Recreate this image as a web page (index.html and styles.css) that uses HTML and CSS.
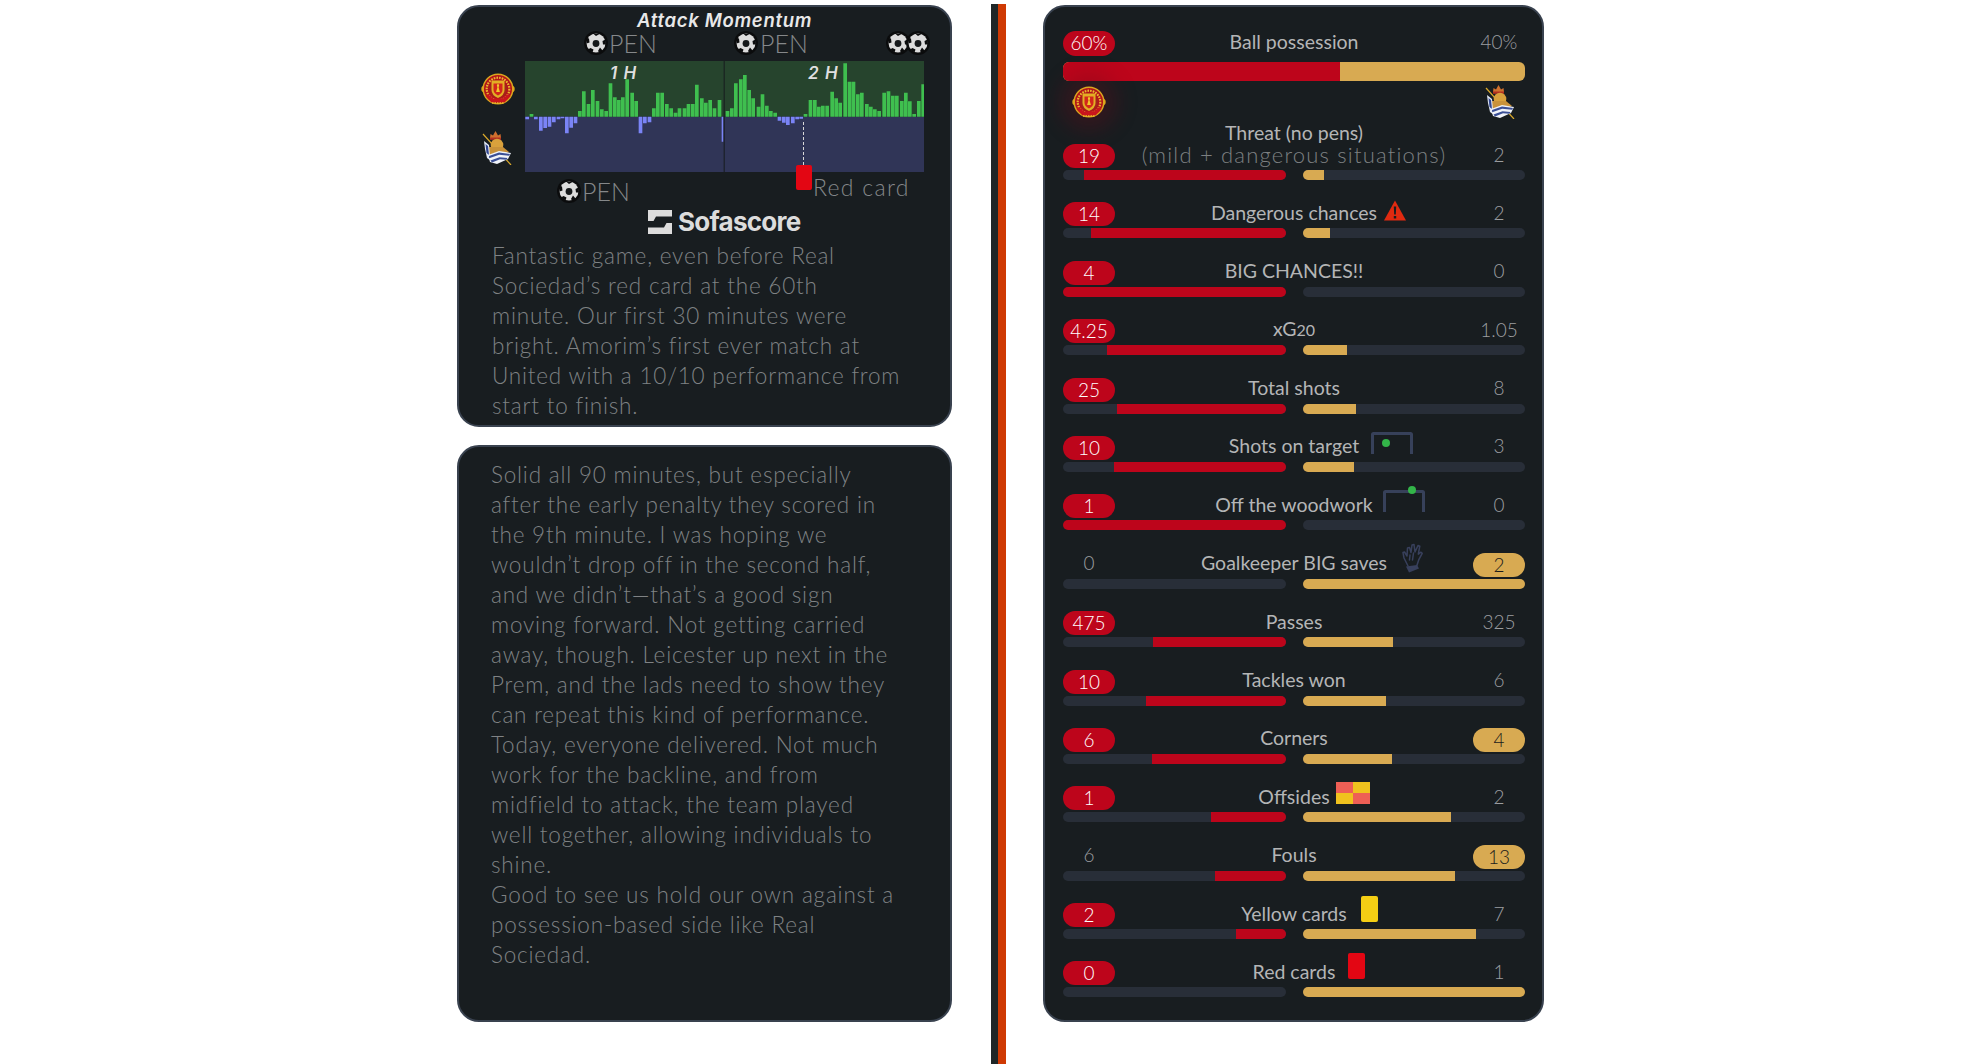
FILE: index.html
```html
<!DOCTYPE html>
<html lang="en">
<head>
<meta charset="utf-8">
<title>Match stats</title>
<link rel="stylesheet" href="styles.css">
</head>
<body>
<svg class="defs" width="0" height="0" aria-hidden="true">
  <symbol id="ball" viewBox="0 0 24 24">
    <circle cx="12" cy="12" r="12" fill="#0b0c0d"/>
    <circle cx="12" cy="12" r="9.500" fill="#dcdcdc"/>
    <circle cx="12" cy="12.500" r="3.400" fill="#15181a"/>
    <path d="M9 2.500l3 2.500 3.500-2zM21.500 8.500l-3 1.500 .5 3.500 3 0zM18.500 19.500l-2.500-3-2 3.500 1.500 2zM8.500 21.500l1-3-3-1.500-2.500 1.500zM2.500 12.500l3-1-.5-4-2-.5z" fill="#0b0c0d"/>
  </symbol>
  <symbol id="mu" viewBox="0 0 34 34">
    <circle cx="3.500" cy="17" r="3.200" fill="#e0a818"/>
    <circle cx="30.500" cy="17" r="3.200" fill="#e0a818"/>
    <circle cx="17" cy="17" r="14.800" fill="#b3141a" stroke="#dba71e" stroke-width="1.500"/>
    <circle cx="17" cy="17" r="11.300" fill="none" stroke="#eab92c" stroke-width="2.200" stroke-dasharray="1.600 1.100"/>
    <circle cx="17" cy="17" r="9" fill="#a3241a"/>
    <path d="M10.500 8.500h13v9.500q0 5-6.500 8-6.500-3-6.500-8z" fill="#e3ae24"/>
    <path d="M12.500 11.500h9v6.500q0 3-4.500 5.500-4.500-2.500-4.500-5.500z" fill="#d3261c"/>
    <path d="M15.800 13l1.200-1.200 1.200 1.200-.6 2.500 1.300 4.500h-3.800l1.300-4.500z" fill="#f0c62a"/>
    <path d="M4.500 24l6 6.500h13l6-6.500-2.500-2-5 4.500h-10l-5-4.500z" fill="#c9161d"/>
    <path d="M11 31h12" stroke="#eab92c" stroke-width="1.400" stroke-dasharray="1.500 1"/>
  </symbol>
  <symbol id="rs" viewBox="0 0 34 34">
    <path d="M2 3l28 31" stroke="#d9a92b" stroke-width="1.200"/>
    <path d="M9 7l.5-4 2.500 1.500L14.500 0l2.500 4.500L19.500 3l.5 4z" fill="#d0702e"/>
    <path d="M9 6.500h11v2.300H9z" fill="#b3301f"/>
    <circle cx="16" cy="14" r="6.300" fill="#d9a13c"/>
    <path d="M8 16h14l6 5-10 4-10-1z" fill="#c9923a"/>
    <path d="M3 10l5 4 1 11 1 5-4-3-2-9z" fill="#e3e9f4"/>
    <path d="M4.500 13l2.500 2 1 9-2.500-2z" fill="#31468f"/>
    <path d="M7 24l11-4 12 2-3 6-11 5-7-2z" fill="#f0f3f9"/>
    <path d="M8 25l10-3.500 11 1.500-.8 1.800-10-1-10 3.500zM9.500 29.500l9-3.200 8 .7-1 1.800-6.500-.500-8 3.300z" fill="#3a4f96"/>
  </symbol>
  <symbol id="goal" viewBox="0 0 42 22">
    <path d="M1.500 22V2.500q0-1 1-1h37q1 0 1 1V22" fill="none" stroke="#37415a" stroke-width="3"/>
  </symbol>
</svg>

<main class="page">
  <div class="col">
    <section class="card card-top">
      <div class="momentum">
        <div class="mm-title">Attack Momentum</div>
        <svg class="mm-ball b1"><use href="#ball"/></svg><span class="mm-pen p1">PEN</span>
        <svg class="mm-ball b2"><use href="#ball"/></svg><span class="mm-pen p2">PEN</span>
        <svg class="mm-ball b3"><use href="#ball"/></svg>
        <svg class="mm-ball b4"><use href="#ball"/></svg>

        <svg class="chart" width="399" height="111" viewBox="0 0 1197 333">
          <rect width="1197" height="167" fill="#26442d"/>
          <rect y="167" width="1197" height="166" fill="#303557"/>
          <path fill="#3fbf4f" d="M14 167v-8h11v8zM159 167v-17h11v17zM171 167v-76h11v76zM185 167v-38h11v38zM198 167v-80h11v80zM212 167v-47h11v47zM225 167v-22h11v22zM238 167v-17h11v17zM251 167v-100h11v100zM264 167v-58h11v58zM276 167v-50h11v50zM288 167v-58h11v58zM301 167v-112h11v112zM316 167v-72h11v72zM328 167v-47h11v47zM381 167v-25h11v25zM393 167v-72h11v72zM406 167v-72h11v72zM420 167v-38h11v38zM433 167v-25h11v25zM446 167v-12h11v12zM458 167v-25h11v25zM473 167v-25h11v25zM485 167v-38h11v38zM498 167v-38h11v38zM510 167v-96h11v96zM525 167v-55h11v55zM537 167v-42h11v42zM550 167v-50h11v50zM563 167v-25h11v25zM578 167v-50h11v50zM602 167v-17h11v17zM615 167v-25h11v25zM627 167v-100h11v100zM642 167v-112h11v112zM654 167v-125h11v125zM667 167v-80h11v80zM679 167v-55h11v55zM695 167v-30h11v30zM707 167v-67h11v67zM720 167v-33h11v33zM732 167v-17h11v17zM745 167v-12h11v12zM836 167v-8h11v8zM851 167v-50h11v50zM864 167v-50h11v50zM876 167v-30h11v30zM888 167v-33h11v33zM901 167v-33h11v33zM916 167v-75h11v75zM928 167v-55h11v55zM940 167v-42h11v42zM955 167v-160h11v160zM968 167v-105h11v105zM980 167v-105h11v105zM993 167v-67h11v67zM1005 167v-72h11v72zM1020 167v-38h11v38zM1032 167v-30h11v30zM1044 167v-22h11v22zM1057 167v-17h11v17zM1072 167v-72h11v72zM1085 167v-76h11v76zM1098 167v-63h11v63zM1110 167v-63h11v63zM1125 167v-47h11v47zM1137 167v-72h11v72zM1149 167v-46h11v46zM1162 167v-8h11v8zM1176 167v-47h11v47zM1189 167v-97h8v97z"/>
          <path fill="#7a84f6" d="M1 167v8h11v-8zM27 167v8h11v-8zM42 167v42h11v-42zM55 167v34h11v-34zM68 167v30h11v-30zM81 167v17h11v-17zM95 167v8h11v-8zM107 167v5h11v-5zM120 167v50h11v-50zM133 167v33h11v-33zM146 167v20h11v-20zM341 167v50h11v-50zM354 167v20h11v-20zM368 167v17h11v-17zM590 167v75h5v-75zM758 167v12h11v-12zM771 167v18h11v-18zM783 167v25h11v-25zM798 167v20h11v-20zM811 167v8h11v-8zM823 167v6h11v-6z"/>
          <rect x="596" width="3" height="333" fill="#171b1e"/>
        </svg>

        <span class="mm-half h1">1 H</span>
        <span class="mm-half h2">2 H</span>
        <svg class="mm-crest c1"><use href="#mu"/></svg>
        <svg class="mm-crest c2"><use href="#rs"/></svg>

        <svg class="mm-ball b5"><use href="#ball"/></svg><span class="mm-pen p3">PEN</span>
        <span class="mm-dash"></span>
        <span class="mm-red"></span>
        <span class="mm-pen p4">Red card</span>

        <svg class="sofa-icon" viewBox="0 0 24 24"><path d="M0 0H24V6.500H8L5.500 11H0ZM24 24H0V17.500H16L18.500 13H24Z" fill="#dcdcdc"/></svg>
        <span class="sofa-text">Sofascore</span>
      </div>
      <p class="note note-top">Fantastic game, even before Real<br>Sociedad’s red card at the 60th<br>minute. Our first 30 minutes were<br>bright. Amorim’s first ever match at<br>United with a 10/10 performance from<br>start to finish.</p>
    </section>

    <section class="card card-bottom">
      <p class="note">Solid all 90 minutes, but especially<br>after the early penalty they scored in<br>the 9th minute. I was hoping we<br>wouldn’t drop off in the second half,<br>and we didn’t—that’s a good sign<br>moving forward. Not getting carried<br>away, though. Leicester up next in the<br>Prem, and the lads need to show they<br>can repeat this kind of performance.<br>Today, everyone delivered. Not much<br>work for the backline, and from<br>midfield to attack, the team played<br>well together, allowing individuals to<br>shine.<br>Good to see us hold our own against a<br>possession-based side like Real<br>Sociedad.</p>
    </section>
  </div>

  <div class="stripe"></div>

  <section class="card card-stats">
    <div class="head head-poss">
      <span class="pill red">60%</span>
      <span class="label">Ball possession</span>
      <span class="val">40%</span>
    </div>
    <div class="poss-bar"><span class="poss-home"></span></div>
    <div class="crests">
      <span class="glow"><svg class="crest"><use href="#mu"/></svg></span>
      <svg class="crest"><use href="#rs"/></svg>
    </div>

    <div class="threat-title">Threat (no pens)</div>
    <div class="stat">
      <div class="head"><span class="pill red">19</span><span class="sublabel">(mild + dangerous situations)</span><span class="val">2</span></div>
      <div class="bars"><div class="track"><i class="home" style="width:90.5%"></i></div><div class="track"><i class="away" style="width:9.5%"></i></div></div>
    </div>

    <div class="stat">
      <div class="head"><span class="pill red">14</span><span class="label">Dangerous chances</span><span class="val">2</span>
        <svg class="ico ico-warn" viewBox="0 0 22 21"><path d="M11 0.500L22 20.500H0Z" fill="#e02a10"/><path d="M9.800 6.500h2.400l-.4 8h-1.600zM9.800 16h2.400v2.400H9.800z" fill="#181d20"/></svg>
      </div>
      <div class="bars"><div class="track"><i class="home" style="width:87.5%"></i></div><div class="track"><i class="away" style="width:12.5%"></i></div></div>
    </div>

    <div class="stat">
      <div class="head"><span class="pill red">4</span><span class="label">BIG CHANCES!!</span><span class="val">0</span></div>
      <div class="bars"><div class="track"><i class="home" style="width:100%"></i></div><div class="track"></div></div>
    </div>

    <div class="stat">
      <div class="head"><span class="pill red">4.25</span><span class="label">xG<small class="oldstyle">20</small></span><span class="val">1.05</span></div>
      <div class="bars"><div class="track"><i class="home" style="width:80.2%"></i></div><div class="track"><i class="away" style="width:19.8%"></i></div></div>
    </div>

    <div class="stat">
      <div class="head"><span class="pill red">25</span><span class="label">Total shots</span><span class="val">8</span></div>
      <div class="bars"><div class="track"><i class="home" style="width:75.8%"></i></div><div class="track"><i class="away" style="width:24.2%"></i></div></div>
    </div>

    <div class="stat">
      <div class="head"><span class="pill red">10</span><span class="label">Shots on target</span><span class="val">3</span>
        <span class="ico ico-sot"><svg class="goal"><use href="#goal"/></svg><span class="goal-dot dot-in"></span></span>
      </div>
      <div class="bars"><div class="track"><i class="home" style="width:76.9%"></i></div><div class="track"><i class="away" style="width:23.1%"></i></div></div>
    </div>

    <div class="stat">
      <div class="head"><span class="pill red">1</span><span class="label">Off the woodwork</span><span class="val">0</span>
        <span class="ico ico-wood"><svg class="goal"><use href="#goal"/></svg><span class="goal-dot dot-bar"></span></span>
      </div>
      <div class="bars"><div class="track"><i class="home" style="width:100%"></i></div><div class="track"></div></div>
    </div>

    <div class="stat">
      <div class="head"><span class="val">0</span><span class="label">Goalkeeper BIG saves</span><span class="pill gold">2</span>
        <svg class="ico ico-glove" viewBox="0 0 24 30"><g fill="none" stroke="#38405c" stroke-width="1.500" stroke-linejoin="round" stroke-linecap="round"><path d="M7 23L3 15 2 9.500l1.500-.5 2.500 4 .5-8 2-.5 1.500 5 1-7.500 2-.5 1 7.500 3-6.500 1.800.7-1.500 8 2.700-2 1.200 1.200-3.500 6.500-2 6"/><path d="M9 12l-.5 5M12.500 10l-1 7"/></g><path d="M5 23.500l11-1.500 2 3.500-10 4z" fill="#38405c"/></svg>
      </div>
      <div class="bars"><div class="track"></div><div class="track"><i class="away" style="width:100%"></i></div></div>
    </div>

    <div class="stat">
      <div class="head"><span class="pill red">475</span><span class="label">Passes</span><span class="val">325</span></div>
      <div class="bars"><div class="track"><i class="home" style="width:59.4%"></i></div><div class="track"><i class="away" style="width:40.6%"></i></div></div>
    </div>

    <div class="stat">
      <div class="head"><span class="pill red">10</span><span class="label">Tackles won</span><span class="val">6</span></div>
      <div class="bars"><div class="track"><i class="home" style="width:62.5%"></i></div><div class="track"><i class="away" style="width:37.5%"></i></div></div>
    </div>

    <div class="stat">
      <div class="head"><span class="pill red">6</span><span class="label">Corners</span><span class="pill gold">4</span></div>
      <div class="bars"><div class="track"><i class="home" style="width:60%"></i></div><div class="track"><i class="away" style="width:40%"></i></div></div>
    </div>

    <div class="stat">
      <div class="head"><span class="pill red">1</span><span class="label">Offsides</span><span class="val">2</span>
        <span class="ico ico-flag"><i class="cell-r"></i><i class="cell-y"></i><i class="cell-y"></i><i class="cell-r"></i></span>
      </div>
      <div class="bars"><div class="track"><i class="home" style="width:33.3%"></i></div><div class="track"><i class="away" style="width:66.7%"></i></div></div>
    </div>

    <div class="stat">
      <div class="head"><span class="val">6</span><span class="label">Fouls</span><span class="pill gold">13</span></div>
      <div class="bars"><div class="track"><i class="home" style="width:31.6%"></i></div><div class="track"><i class="away" style="width:68.4%"></i></div></div>
    </div>

    <div class="stat">
      <div class="head"><span class="pill red">2</span><span class="label">Yellow cards</span><span class="val">7</span>
        <span class="ico ico-yellow"></span>
      </div>
      <div class="bars"><div class="track"><i class="home" style="width:22.2%"></i></div><div class="track"><i class="away" style="width:77.8%"></i></div></div>
    </div>

    <div class="stat">
      <div class="head"><span class="pill red">0</span><span class="label">Red cards</span><span class="val">1</span>
        <span class="ico ico-redcard"></span>
      </div>
      <div class="bars"><div class="track"></div><div class="track"><i class="away" style="width:100%"></i></div></div>
    </div>
  </section>
</main>
</body>
</html>
```

FILE: styles.css
```css
* { box-sizing: border-box; }
html, body { margin: 0; padding: 0; background: #fff; }
body { height: 1064px; overflow: hidden; font-family: "Lato", "Liberation Sans", sans-serif; }
.defs { position: absolute; }

.page { display: flex; align-items: flex-start; padding: 5px 0 0 457px; }
.col { display: flex; flex-direction: column; gap: 18px; width: 495px; }

.card { background: #181d20; border: 2px solid #39424f; border-radius: 22px; }
.card-top { height: 422px; }
.card-bottom { height: 577px; padding-top: 13px; }
.card-stats { width: 501px; height: 1017px; margin-left: 37px; padding: 24px 17px 0 18px; }

.stripe {
  width: 15px; height: 1060px; margin: -1px 0 0 39px;
  background: linear-gradient(to right, #1f2627 0, #1f2627 7px, #cf3a04 7px);
}

.note {
  margin: 0; padding-left: 32px; white-space: nowrap;
  font-weight: 300; font-size: 22.500px; line-height: 30px; letter-spacing: .8px; color: #7f8284;
}
.note-top { padding-left: 33px; }

/* Momentum: annotations sit freely over the chart */
.momentum { position: relative; height: 234px; padding: 54px 0 0 66px; }
.chart { display: block; }
.mm-title {
  position: absolute; left: 178px; top: 3px;
  font: italic 600 18.500px/20px "Inter", sans-serif; letter-spacing: .7px; color: #e8e8e8; white-space: nowrap;
}
.mm-ball { position: absolute; width: 24px; height: 24px; top: 24px; }
.b1 { left: 125px; } .b2 { left: 275px; } .b3 { left: 427px; } .b4 { left: 447px; }
.b5 { left: 98px; top: 172px; }
.mm-pen { position: absolute; top: 24px; font-weight: 300; font-size: 25px; line-height: 24px; color: #85888a; white-space: nowrap; }
.p1 { left: 150px; } .p2 { left: 301px; } .p3 { left: 123px; top: 172px; }
.p4 { left: 354px; top: 168px; letter-spacing: 1.300px; font-size: 23px; }
.mm-half { position: absolute; top: 56px; font: italic 600 17px/20px "Inter", sans-serif; color: #dfdfdf; letter-spacing: 1px; }
.h1 { left: 151px; } .h2 { left: 349px; }
.mm-crest { position: absolute; left: 22px; width: 34px; height: 34px; }
.c1 { top: 65px; } .c2 { top: 124px; }
.mm-dash { position: absolute; left: 344px; top: 115px; height: 43px; border-left: 1.500px dashed #d8d8d8; }
.mm-red { position: absolute; left: 337px; top: 158px; width: 16px; height: 25px; background: #e30613; border-radius: 2px; }
.sofa-icon { position: absolute; left: 189px; top: 203px; width: 24px; height: 24px; }
.sofa-text { position: absolute; left: 219px; top: 201px; font: 700 26px/28px "Inter", sans-serif; letter-spacing: -.75px; color: #dcdcdc; }

/* Stats */
.head { position: relative; display: grid; grid-template-columns: 52px 1fr 52px; align-items: center; height: 24px; text-align: center; }
.head-poss { height: 25px; }
.pill { height: 100%; border-radius: 13px; font-weight: 300; font-size: 19px; line-height: 23px; }
.pill.red { background: #bd051b; color: #fff; }
.pill.gold { background: #d8aa52; color: #1b1b1b; }
.label { font-size: 19.500px; line-height: 20px; margin-top: -3px; color: #b4b5b6; white-space: nowrap; }
.oldstyle { font-size: 16px; }
.sublabel { font-weight: 300; font-size: 22px; line-height: 20px; margin-top: -3px; letter-spacing: 1.200px; color: #7d8082; white-space: nowrap; }
.val { font-weight: 300; font-size: 19px; line-height: 20px; margin-top: -3px; color: #9c9ea0; }

.poss-bar { height: 19px; margin-top: 6px; background: #d8aa52; border-radius: 6px; overflow: hidden; }
.poss-home { display: block; width: 60%; height: 100%; background: #bd051b; }
.crests { display: flex; justify-content: space-between; height: 34px; margin-top: 4px; padding: 0 7px 0 9px; }
.crest { width: 34px; height: 34px; display: block; }
.glow {
  display: block; width: 34px; height: 34px; border-radius: 50%;
  box-shadow: 0 0 20px 12px rgba(110, 10, 25, .3); background: rgba(110, 10, 25, .3);
}
.threat-title { height: 20px; margin-top: 5px; font-size: 19.500px; line-height: 18px; text-align: center; color: #b4b5b6; }

.stat { height: 36px; margin-bottom: 22.400px; }
.bars { display: grid; grid-template-columns: 1fr 1fr; gap: 17px; margin-top: 2px; }
.track { position: relative; display: flex; height: 10px; background: #282e38; border-radius: 5px; overflow: hidden; }
.track:first-child { justify-content: flex-end; }
.home { display: block; height: 100%; background: #bd051b; }
.away { display: block; height: 100%; background: #d8aa52; }

/* Icons hang beside centred labels */
.ico { position: absolute; display: block; }
.ico-warn { left: 321px; top: -2px; width: 22px; height: 21px; }
.ico-sot { left: 308px; top: -4px; width: 42px; height: 22px; }
.ico-wood { left: 320px; top: -4px; width: 42px; height: 22px; }
.goal { display: block; width: 42px; height: 22px; }
.goal-dot { position: absolute; width: 8px; height: 8px; border-radius: 50%; background: #33b549; }
.dot-in { left: 11px; top: 7px; }
.dot-bar { left: 25px; top: -4px; }
.ico-glove { left: 338px; top: -10px; width: 24px; height: 30px; }
.ico-flag { left: 273px; top: -4px; width: 34px; height: 22px; display: grid; grid-template-columns: 1fr 1fr; grid-template-rows: 1fr 1fr; }
.cell-r { background: #ee5f55; }
.cell-y { background: #f0c21e; }
.ico-yellow { left: 298px; top: -7px; width: 17px; height: 26px; background: #f4ce14; border-radius: 2px; }
.ico-redcard { left: 285px; top: -8px; width: 17px; height: 26px; background: #e30613; border-radius: 2px; }
```
